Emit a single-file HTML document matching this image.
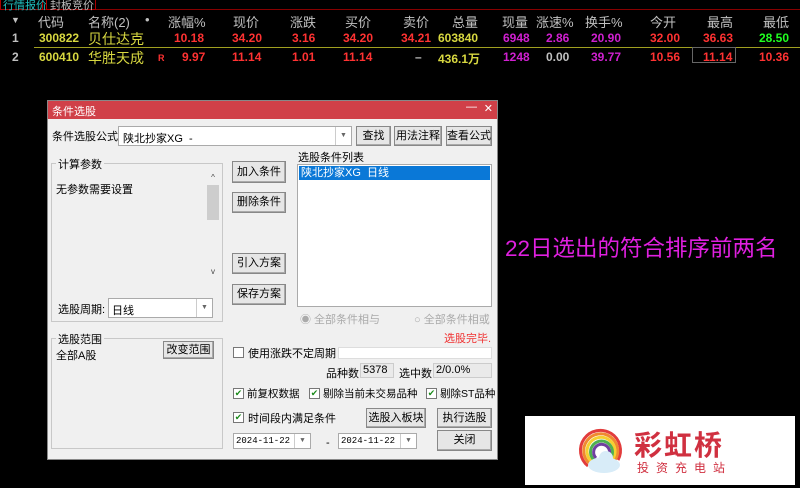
<!DOCTYPE html>
<html><head><meta charset="utf-8"><style>
*{margin:0;padding:0;box-sizing:border-box}
body{width:800px;height:488px;background:#000;position:relative;overflow:hidden;font-family:"Liberation Sans","Noto Sans CJK SC",sans-serif;font-size:12px}
.a{position:absolute;white-space:nowrap}
.h{color:#c0c0c0;font-size:13px;top:12px}
.r1{top:31px;font-size:12px;font-weight:bold}
.r2{top:50px;font-size:12px;font-weight:bold}
.red{color:#ff3232}.yel{color:#d8d840}.pur{color:#d020d0}.gry{color:#c0c0c0}.grn{color:#20ff20}
.dlg{position:absolute;left:47px;top:100px;width:451px;height:360px;background:#f0f0f0;border:1px solid #888;color:#000;font-size:11px}
.tb{position:absolute;left:0;top:0;width:100%;height:18px;background:#d04048;color:#fff;font-size:11px;padding:2px 4px}
.btn{position:absolute;background:#e6e6e6;border:1px solid #888;box-shadow:inset -1px -1px 0 #aaa;text-align:center;font-size:11px;line-height:18px}
.box{position:absolute;background:#fff;border:1px solid #aaa}
.grp{position:absolute;border:1px solid #c8c8c8}
.lab{position:absolute;font-size:11px;white-space:nowrap}
.cb{position:absolute;width:11px;height:11px;border:1px solid #777;background:#fff;font-size:9px;color:#1a8a1a;line-height:9px;text-align:center}
.dd{position:absolute;right:0;top:0;width:16px;height:100%;border-left:1px solid #ccc;color:#666;font-size:7px;text-align:center;padding-top:5px;background:#fff}
</style></head><body>
<div class="a" style="left:0;top:0;width:800px;height:10px;border-bottom:1px solid #800;"></div>
<div class="a" style="left:0;top:-4px;width:43px;height:14px;border:1px solid #a00;color:#20c0c0;font-size:11px;padding-left:2px">行情报价</div>
<div class="a" style="left:46px;top:-4px;width:50px;height:14px;border:1px solid #a00;color:#c0c0c0;font-size:11px;padding-left:3px">封板竞价</div>

<div class="a h" style="left:11px;font-size:9px;top:15px">▼</div>
<div class="a h" style="left:38px">代码</div>
<div class="a h" style="left:88px">名称(2)</div>
<div class="a h" style="left:145px">•</div>
<div class="a h" style="left:168px">涨幅%</div>
<div class="a h" style="left:233px">现价</div>
<div class="a h" style="left:290px">涨跌</div>
<div class="a h" style="left:345px">买价</div>
<div class="a h" style="left:403px">卖价</div>
<div class="a h" style="left:452px">总量</div>
<div class="a h" style="left:502px">现量</div>
<div class="a h" style="left:536px">涨速%</div>
<div class="a h" style="left:585px">换手%</div>
<div class="a h" style="left:650px">今开</div>
<div class="a h" style="left:707px">最高</div>
<div class="a h" style="left:763px">最低</div>

<div class="a r1 gry" style="left:12px">1</div>
<div class="a r1 yel" style="left:39px">300822</div>
<div class="a r1 yel" style="left:88px;font-weight:normal;font-size:14px;top:29px">贝仕达克</div>
<div class="a r1 red" style="left:174px">10.18</div>
<div class="a r1 red" style="left:232px">34.20</div>
<div class="a r1 red" style="left:292px">3.16</div>
<div class="a r1 red" style="left:343px">34.20</div>
<div class="a r1 red" style="left:401px">34.21</div>
<div class="a r1 yel" style="left:438px">603840</div>
<div class="a r1 pur" style="left:503px">6948</div>
<div class="a r1 pur" style="left:546px">2.86</div>
<div class="a r1 pur" style="left:591px">20.90</div>
<div class="a r1 red" style="left:650px">32.00</div>
<div class="a r1 red" style="left:703px">36.63</div>
<div class="a r1 grn" style="left:759px">28.50</div>
<div class="a" style="left:34px;top:47px;width:766px;height:1px;background:#a0a020"></div>
<div class="a r2 gry" style="left:12px">2</div>
<div class="a r2 yel" style="left:39px">600410</div>
<div class="a r2 yel" style="left:88px;font-weight:normal;font-size:14px;top:48px">华胜天成</div>
<div class="a r2 red" style="left:158px;font-size:9px;top:53px">R</div>
<div class="a r2 red" style="left:182px">9.97</div>
<div class="a r2 red" style="left:232px">11.14</div>
<div class="a r2 red" style="left:292px">1.01</div>
<div class="a r2 red" style="left:343px">11.14</div>
<div class="a r2 gry" style="left:415px">–</div>
<div class="a r2 yel" style="left:438px">436.1万</div>
<div class="a r2 pur" style="left:503px">1248</div>
<div class="a r2 gry" style="left:546px">0.00</div>
<div class="a r2 pur" style="left:591px">39.77</div>
<div class="a r2 red" style="left:650px">10.56</div>
<div class="a" style="left:692px;top:47px;width:44px;height:16px;border:1px solid #666"></div>
<div class="a r2 red" style="left:703px">11.14</div>
<div class="a r2 red" style="left:759px">10.36</div>

<div class="a" style="left:505px;top:231px;color:#e020e0;font-size:22.5px">22日选出的符合排序前两名</div>

<div class="dlg">
<div class="tb">条件选股<span style="position:absolute;right:20px;top:0">—</span><span style="position:absolute;right:4px;top:1px">✕</span></div>
<div class="lab" style="left:4px;top:27px">条件选股公式</div>
<div class="box" style="left:70px;top:25px;width:234px;height:20px;padding:3px 4px">陕北抄家XG&nbsp; -<div class="dd">▼</div></div>
<div class="btn" style="left:308px;top:25px;width:35px;height:20px">查找</div>
<div class="btn" style="left:346px;top:25px;width:48px;height:20px">用法注释</div>
<div class="btn" style="left:398px;top:25px;width:46px;height:20px">查看公式</div>

<div class="grp" style="left:3px;top:62px;width:172px;height:159px"></div>
<div class="lab" style="left:8px;top:55px;background:#f0f0f0;padding:0 2px">计算参数</div>
<div class="lab" style="left:8px;top:80px">无参数需要设置</div>
<div class="a" style="left:159px;top:72px;width:12px;height:103px;background:#f0f0f0;font-size:8px;color:#444;text-align:center">^<div style="position:absolute;left:0;top:12px;width:12px;height:35px;background:#cdcdcd"></div><div style="position:absolute;left:0;bottom:0;width:12px">v</div></div>
<div class="lab" style="left:10px;top:200px">选股周期:</div>
<div class="box" style="left:60px;top:197px;width:105px;height:20px;padding:3px 3px">日线<div class="dd">▼</div></div>

<div class="grp" style="left:3px;top:237px;width:172px;height:111px"></div>
<div class="lab" style="left:8px;top:230px;background:#f0f0f0;padding:0 2px">选股范围</div>
<div class="lab" style="left:8px;top:246px">全部A股</div>
<div class="btn" style="left:115px;top:240px;width:51px;height:18px;line-height:16px">改变范围</div>

<div class="btn" style="left:184px;top:60px;width:54px;height:22px;line-height:20px">加入条件</div>
<div class="btn" style="left:184px;top:91px;width:54px;height:21px;line-height:19px">删除条件</div>
<div class="btn" style="left:184px;top:152px;width:54px;height:21px;line-height:19px">引入方案</div>
<div class="btn" style="left:184px;top:183px;width:54px;height:21px;line-height:19px">保存方案</div>

<div class="lab" style="left:250px;top:48px">选股条件列表</div>
<div class="box" style="left:249px;top:63px;width:195px;height:143px"><div style="margin:1px;height:14px;background:#0a78d7;color:#fff;padding-left:2px;line-height:14px;font-size:11px">陕北抄家XG&nbsp; 日线</div></div>
<div class="lab" style="left:252px;top:210px;color:#aaa">◉ 全部条件相与</div>
<div class="lab" style="left:366px;top:210px;color:#aaa">○ 全部条件相或</div>
<div class="lab" style="left:396px;top:229px;color:#f03030">选股完毕.</div>

<div class="cb" style="left:185px;top:246px"></div>
<div class="lab" style="left:200px;top:244px">使用涨跌不定周期</div>
<div class="box" style="left:290px;top:246px;width:154px;height:12px;border-color:#ddd"></div>
<div class="lab" style="left:278px;top:264px">品种数</div>
<div class="box" style="left:312px;top:262px;width:34px;height:15px;background:#eaeaea;border-color:#ccc;padding-left:2px;font-size:11px">5378</div>
<div class="lab" style="left:351px;top:264px">选中数</div>
<div class="box" style="left:385px;top:262px;width:59px;height:15px;background:#eaeaea;border-color:#ccc;padding-left:2px;font-size:11px">2/0.0%</div>

<div class="cb" style="left:185px;top:287px">✔</div><div class="lab" style="left:199px;top:285px;font-size:10.5px">前复权数据</div>
<div class="cb" style="left:261px;top:287px">✔</div><div class="lab" style="left:275px;top:285px;font-size:10.5px">剔除当前未交易品种</div>
<div class="cb" style="left:378px;top:287px">✔</div><div class="lab" style="left:392px;top:285px;font-size:10.5px">剔除ST品种</div>
<div class="cb" style="left:185px;top:311px">✔</div><div class="lab" style="left:200px;top:309px">时间段内满足条件</div>
<div class="btn" style="left:318px;top:307px;width:60px;height:20px">选股入板块</div>
<div class="btn" style="left:389px;top:307px;width:55px;height:20px">执行选股</div>
<div class="box" style="left:185px;top:332px;width:78px;height:16px;padding:2px 2px;font-family:'Liberation Mono',monospace;font-size:9px">2024-11-22<div class="dd" style="padding-top:3px">▼</div></div>
<div class="lab" style="left:278px;top:336px">-</div>
<div class="box" style="left:290px;top:332px;width:79px;height:16px;padding:2px 2px;font-family:'Liberation Mono',monospace;font-size:9px">2024-11-22<div class="dd" style="padding-top:3px">▼</div></div>
<div class="btn" style="left:389px;top:329px;width:55px;height:21px;line-height:19px">关闭</div>
</div>

<div class="a" style="left:525px;top:416px;width:270px;height:69px;background:#fff"></div>
<svg class="a" style="left:574px;top:420px" width="56" height="56" viewBox="0 0 56 56">
<g fill="none" stroke-width="3">
<path d="M44 40 A20 20 0 1 0 14 46" stroke="#e23c3c"/>
<path d="M41 40 A17 17 0 1 0 16 44" stroke="#f08a30"/>
<path d="M38 40 A14 14 0 1 0 18 42" stroke="#f5d030"/>
<path d="M35 40 A11 11 0 1 0 20 40" stroke="#50b050"/>
<path d="M32 39 A8 8 0 1 0 22 38" stroke="#7040a0"/>
</g>
<ellipse cx="30" cy="45" rx="16" ry="8" fill="#d8ecf8"/>
<circle cx="32" cy="38" r="7" fill="#d8ecf8"/>
</svg>
<div class="a" style="left:634px;top:424px;color:#d03040;font-size:28px;font-weight:bold;letter-spacing:2px">彩虹桥</div>
<div class="a" style="left:637px;top:459px;color:#d03040;font-size:12px;letter-spacing:7px">投资充电站</div>
</body></html>
